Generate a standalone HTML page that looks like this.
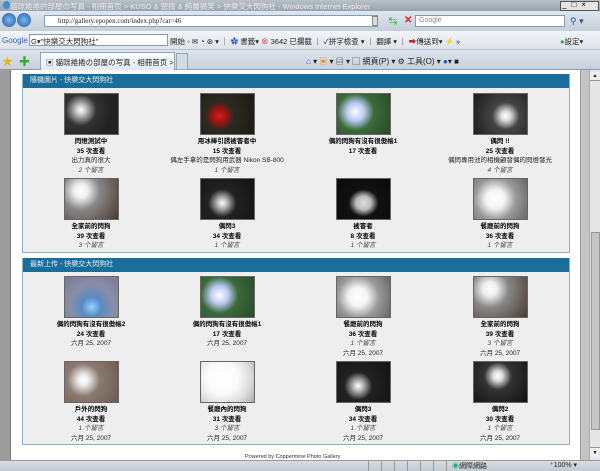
<!DOCTYPE html>
<html><head><meta charset="utf-8"><style>
*{margin:0;padding:0;box-sizing:border-box}
body{width:600px;height:471px;overflow:hidden;position:relative;background:#fff;font-family:"Liberation Sans","Noto Sans CJK TC",sans-serif;}
.a{position:absolute}
.bar{position:absolute;left:0;width:600px}
.it{position:absolute;width:136px;text-align:center;font-size:6.5px;line-height:9.5px;color:#222}
.th{width:55px;height:42px;margin:0 auto 2px;border:1px solid #666}
.b{font-weight:bold;color:#000}
.i{font-style:italic;color:#444}
.hd{position:absolute;height:14px;background:#1b6d9a;color:#e8f2f8;font-size:7px;line-height:14px;padding-left:7px}
.pn{position:absolute;background:#eeeeee;border:1px solid #8ab0c4}
.tb{font-size:7.5px;color:#222;position:absolute;white-space:nowrap}
</style></head><body>
<div class="bar" style="top:0;height:11px;background:linear-gradient(#b8c0c8,#9aa3ad);"></div>
<div class="tb" style="left:10px;top:1px;font-size:7.5px;color:#e8ecf0">貓咪捲捲的部屋の写真 - 相冊首页 &gt; KUSO &amp; 惡搞 &amp; 純屬搞笑 &gt; 快樂交大閃狗社 - Windows Internet Explorer</div>
<div class="a" style="left:3px;top:1px;width:7px;height:8px;border-radius:50%;background:#3a8fd6"></div>
<div class="a" style="left:560px;top:1px;width:39px;height:10px;background:#e4e4e4;border:1px solid #555"></div>
<div class="tb" style="left:562px;top:0px;font-size:8px;letter-spacing:5px;color:#000">_□×</div>
<div class="bar" style="top:11px;height:20px;background:linear-gradient(#dfe6ee,#c4ced9)"></div>
<div class="a" style="left:2px;top:13px;width:14px;height:14px;border-radius:50%;background:radial-gradient(#7fb6ee,#1e5aa8)"></div>
<div class="a" style="left:17px;top:13px;width:14px;height:14px;border-radius:50%;background:radial-gradient(#7fb6ee,#1e5aa8)"></div>
<div class="a" style="left:44px;top:15px;width:334px;height:12px;background:#fff;border:1px solid #7f9db9"></div>
<div class="tb" style="left:58px;top:17px;font-size:7px;font-family:'Liberation Serif',serif">http://gallery.epopen.com/index.php?cat=46</div>
<div class="a" style="left:372px;top:16px;width:6px;height:10px;background:#ddd;border:1px solid #888"></div>
<div class="a" style="left:389px;top:16px;width:10px;height:10px;color:#2a2;font-size:8px">↹</div>
<div class="a" style="left:404px;top:15px;font-size:10px;color:#d22;font-weight:bold">✕</div>
<div class="a" style="left:415px;top:15px;width:150px;height:12px;background:#fff;border:1px solid #7f9db9"></div>
<div class="tb" style="left:419px;top:17px;font-size:7px;color:#888">Google</div>
<div class="a" style="left:570px;top:16px;font-size:9px;color:#1e5aa8">⚲ ▾</div>
<div class="bar" style="top:31px;height:19px;background:linear-gradient(#f3f5f8,#dde3ea);border-bottom:1px solid #b8c2cc"></div>
<div class="tb" style="left:2px;top:36px;font-size:8px;color:#2f5fc0">Google</div>
<div class="a" style="left:29px;top:34px;width:139px;height:12px;background:#fff;border:1px solid #7f9db9"></div>
<div class="tb" style="left:31px;top:36px">G▾"快樂交大閃狗社"</div>
<div class="tb" style="left:170px;top:36px">開始 ◦ ✉ ◔ ⊛ ▾ ｜ <span style="color:#2050c0">✿</span> 書籤▾ <span style="color:#c22">⊗</span> 3642 已攔截 ｜ ✓拼字檢查 ▾ ｜ 翻譯 ▾ ｜ <span style="color:#c22">➡</span>傳送到▾ <span style="color:#db0">⚡</span> »</div>
<div class="tb" style="left:560px;top:36px"><span style="color:#3a3">●</span>設定▾</div>
<div class="bar" style="top:50px;height:20px;background:linear-gradient(#dde4ec,#c8d1dc);border-bottom:1px solid #8d99a6"></div>
<div class="tb" style="left:2px;top:53px;font-size:11px;color:#e8b600">★</div>
<div class="tb" style="left:19px;top:53px;font-size:11px;color:#3a3">✚</div>
<div class="a" style="left:40px;top:52px;width:135px;height:18px;background:linear-gradient(#fafcfe,#e4eaf1);border:1px solid #98a4b0;border-bottom:none"></div>
<div class="tb" style="left:46px;top:57px">▣ 貓咪捲捲の部屋の写真 - 相冊首页 &gt; ...</div>
<div class="a" style="left:176px;top:53px;width:12px;height:17px;background:#d4dbe3;border:1px solid #98a4b0"></div>
<div class="tb" style="left:306px;top:56px;font-size:8px"><span style="color:#2a66b8">⌂</span> ▾ <span style="color:#e07a00">▣</span> ▾ ▤ ▾ ▢ 網頁(P) ▾ ⚙ 工具(O) ▾ <span style="color:#2050c0">●</span>▾ ■</div>
<div class="a" style="left:0;top:70px;width:11px;height:390px;background:#9c9c9c;border-right:1px solid #777"></div>
<!-- right side gray strip + scrollbar -->
<div class="a" style="left:580px;top:70px;width:10px;height:390px;background:#c4c4c4;border-left:1px solid #999;border-right:1px solid #aaa"></div>
<div class="a" style="left:590px;top:70px;width:10px;height:390px;background:#e6e6e6"></div>
<div class="a" style="left:590px;top:72px;width:10px;height:9px;background:#eee;border-bottom:1px solid #999;font-size:5px;text-align:center;line-height:9px">▲</div>
<div class="a" style="left:591px;top:232px;width:9px;height:198px;background:#c6c6c6;border:1px solid #999"></div>
<div class="a" style="left:590px;top:447px;width:10px;height:10px;background:#eee;border-top:1px solid #999;font-size:5px;text-align:center;line-height:10px">▼</div>

<div class="pn" style="left:22px;top:74px;width:548px;height:179px"></div>
<div class="hd" style="left:23px;top:74px;width:546px">隨機圖片 - 快樂交大閃狗社</div>
<div class="pn" style="left:22px;top:258px;width:548px;height:187px"></div>
<div class="hd" style="left:23px;top:258px;width:546px">最新上传 - 快樂交大閃狗社</div>

<div class="it" style="left:23px;top:93px"><div class="th" style="background:radial-gradient(circle at 30% 40%,#fff 0,#ccc 10%,#333 35%,#222 70%),#222"></div><div class="b">閃燈測試中</div><div class="b">35 次查看</div><div>出力真的很大</div><div class="i">2 个留言</div></div>
<div class="it" style="left:159px;top:93px"><div class="th" style="background:radial-gradient(circle at 35% 55%,#c22 0,#a11 15%,#2a2a20 35%,#1a1a14 100%)"></div><div class="b">用冰棒引誘被害者中</div><div class="b">15 次查看</div><div style="white-space:nowrap">偶左手拿的是閃狗用武器 Nikon SB-800</div><div class="i">1 个留言</div></div>
<div class="it" style="left:295px;top:93px"><div class="th" style="background:radial-gradient(circle at 35% 45%,#fff 0,#b8c8f0 22%,#3a6a3a 45%,#2a4a2a 100%)"></div><div class="b">偶的閃狗有沒有很傲帳1</div><div class="b">17 次查看</div></div>
<div class="it" style="left:432px;top:93px"><div class="th" style="background:radial-gradient(circle at 60% 55%,#fff 0,#ddd 12%,#444 35%,#1a1a1a 100%)"></div><div class="b">偶閃 !!</div><div class="b">25 次查看</div><div style="white-space:nowrap">偶閃專用池的相機顧發偶的閃燈發光</div><div class="i">4 个留言</div></div>
<div class="it" style="left:23px;top:178px"><div class="th" style="background:radial-gradient(circle at 30% 30%,#fff 0,#eee 15%,#888 40%,#4a3a30 100%)"></div><div class="b">全家前的閃狗</div><div class="b">39 次查看</div><div class="i">3 个留言</div></div>
<div class="it" style="left:159px;top:178px"><div class="th" style="background:radial-gradient(circle at 40% 60%,#fff 0,#bbb 12%,#222 35%,#111 100%)"></div><div class="b">偶閃3</div><div class="b">34 次查看</div><div class="i">1 个留言</div></div>
<div class="it" style="left:295px;top:178px"><div class="th" style="background:radial-gradient(ellipse at 50% 60%,#ddd 0,#bbb 20%,#111 40%,#0a0a0a 100%)"></div><div class="b">被害者</div><div class="b">8 次查看</div><div class="i">1 个留言</div></div>
<div class="it" style="left:432px;top:178px"><div class="th" style="background:radial-gradient(circle at 40% 50%,#fff 0,#f4f4f4 25%,#999 55%,#666 100%)"></div><div class="b">餐廳前的閃狗</div><div class="b">36 次查看</div><div class="i">1 个留言</div></div>

<div class="it" style="left:23px;top:276px"><div class="th" style="background:radial-gradient(circle at 50% 75%,#8fd0ff 0,#5a8ac0 25%,#8a8ea8 55%,#777a90 100%)"></div><div class="b">偶的閃狗有沒有很傲帳2</div><div class="b">24 次查看</div><div>六月 25, 2007</div></div>
<div class="it" style="left:159px;top:276px"><div class="th" style="background:radial-gradient(circle at 35% 45%,#fff 0,#b8c8f0 22%,#3a6a3a 45%,#2a4a2a 100%)"></div><div class="b">偶的閃狗有沒有很傲帳1</div><div class="b">17 次查看</div><div>六月 25, 2007</div></div>
<div class="it" style="left:295px;top:276px"><div class="th" style="background:radial-gradient(circle at 40% 50%,#fff 0,#f4f4f4 25%,#999 55%,#666 100%)"></div><div class="b">餐廳前的閃狗</div><div class="b">36 次查看</div><div class="i">1 个留言</div><div>六月 25, 2007</div></div>
<div class="it" style="left:432px;top:276px"><div class="th" style="background:radial-gradient(circle at 30% 30%,#fff 0,#eee 15%,#888 40%,#4a3a30 100%)"></div><div class="b">全家前的閃狗</div><div class="b">39 次查看</div><div class="i">3 个留言</div><div>六月 25, 2007</div></div>
<div class="it" style="left:23px;top:361px"><div class="th" style="background:radial-gradient(circle at 35% 45%,#fff 0,#eee 12%,#8a7a70 40%,#6a5a50 100%)"></div><div class="b">戶外的閃狗</div><div class="b">44 次查看</div><div class="i">1 个留言</div><div>六月 25, 2007</div></div>
<div class="it" style="left:159px;top:361px"><div class="th" style="background:radial-gradient(circle at 40% 40%,#fff 0,#fafafa 40%,#ddd 70%,#aaa 100%)"></div><div class="b">餐廳內的閃狗</div><div class="b">31 次查看</div><div class="i">3 个留言</div><div>六月 25, 2007</div></div>
<div class="it" style="left:295px;top:361px"><div class="th" style="background:radial-gradient(circle at 40% 60%,#fff 0,#bbb 12%,#222 35%,#111 100%)"></div><div class="b">偶閃3</div><div class="b">34 次查看</div><div class="i">1 个留言</div><div>六月 25, 2007</div></div>
<div class="it" style="left:432px;top:361px"><div class="th" style="background:radial-gradient(circle at 45% 35%,#fff 0,#ddd 12%,#333 35%,#111 100%)"></div><div class="b">偶閃2</div><div class="b">30 次查看</div><div class="i">1 个留言</div><div>六月 25, 2007</div></div>

<div class="tb" style="left:245px;top:454px;font-size:5.5px;color:#333">Powered by Coppermine Photo Gallery</div>
<div class="bar" style="top:460px;height:11px;background:linear-gradient(#d8dde3,#c2c9d1);border-top:1px solid #999"></div>
<div class="a" style="left:368px;top:461px;width:80px;height:10px;border-left:1px solid #999;background:repeating-linear-gradient(90deg,transparent 0 12px,#999 12px 13px)"></div>
<div class="tb" style="left:452px;top:461px;font-size:7px"><span style="color:#2a8">◉</span>網際網路</div>
<div class="tb" style="left:550px;top:461px;font-size:7px">⁺100% ▾</div>
</body></html>
